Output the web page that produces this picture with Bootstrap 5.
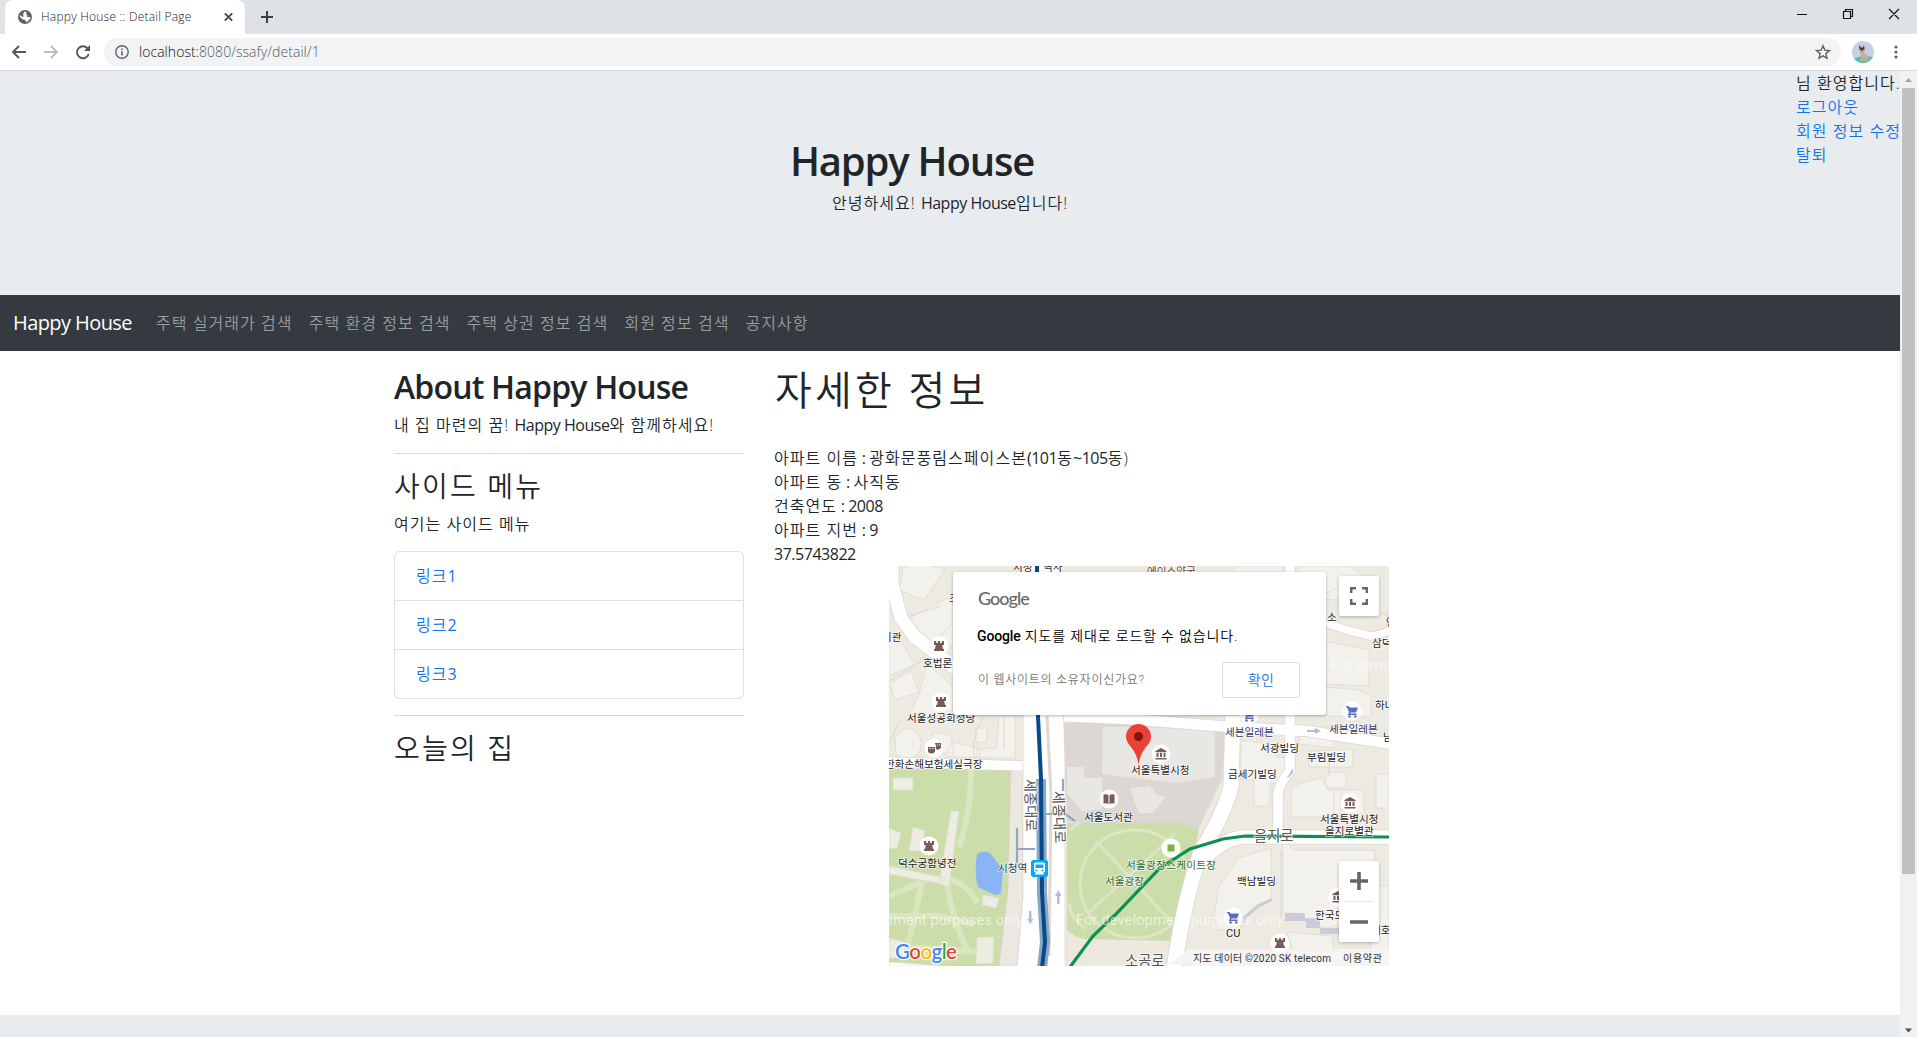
<!DOCTYPE html>
<html lang="ko">
<head>
<meta charset="utf-8">
<meta name="viewport" content="width=device-width, initial-scale=1">
<title>Happy House :: Detail Page</title>
<link href="https://cdn.jsdelivr.net/npm/bootstrap@5.3.0/dist/css/bootstrap.min.css" rel="stylesheet">
<style>
body{font-family:"Open Sans","Noto Sans CJK KR",sans-serif;font-size:16px;line-height:1.5;color:#212529;letter-spacing:.066em;height:1037px;overflow:hidden;font-weight:350}
a{color:#1474ec;text-decoration:none}
.en{letter-spacing:-.03em;font-weight:400}
.tabstrip{height:34px;background:#dee1e6;padding-left:5px}
.browser-tab{width:240px;height:34px;background:#fff;border-radius:8px 8px 0 0;padding:0 12px 0 13px}
.tab-title{font-size:12px;width:152px;margin-left:9px;color:#202124;letter-spacing:.018em;white-space:nowrap;line-height:30px}
.toolbar{height:37px;border-bottom:1px solid #d5d8dc;background:#fff;padding:0 18px 0 11px}
.address{height:28px;border-radius:14px;background:#f1f3f4;margin-left:13px;padding:0 10px 0 11px}
.url{font-size:14px;letter-spacing:.003em;margin-left:10px;color:#111;line-height:26px}
.url span{color:#55595d}
.avatar{margin-left:11px}
.viewport{height:966px}
.page{width:1900px;overflow:hidden;background:#fff}
.scroller{width:17px;background:#f1f1f1}
.thumb{width:13px;height:786px;background:#c1c1c1}
.hero{height:224px;background:#e9ecef;padding-top:66px}
.hero h1{font-size:40px;font-weight:600;line-height:48px;letter-spacing:-.03em;padding-right:76px;margin-bottom:6px}
.hero p{margin:0}
.user-menu{top:0;right:0;width:104px;white-space:nowrap}
.site-nav{height:56px;background:#343a40;padding:8px 13px}
.site-nav .navbar-brand{font-size:20px;letter-spacing:-.029em;margin-right:16px;padding:0;color:#fff;width:119px;white-space:nowrap;font-weight:400;line-height:44px}
.site-nav .nav-link{color:#9a9da0;padding:8px;line-height:22px;white-space:nowrap}
.main-area{max-width:1140px;--bs-gutter-x:30px;padding-top:15px;height:664px;position:relative;left:-1px}
.main-area .row{--bs-gutter-x:30px}
.main-area h2.en{font-size:32px;font-weight:600;line-height:38.4px;letter-spacing:-.025em;white-space:nowrap;padding-top:2px;margin-bottom:7px}
h3{font-size:28px;line-height:33.6px;font-weight:350;letter-spacing:.078em}
.detail-title{font-size:40px;line-height:48px;font-weight:350;margin-bottom:32px;letter-spacing:.08em;padding-left:1px}
hr{border-color:#ccc;opacity:.75}
.side-note{margin-bottom:15px}
.side-links .list-group-item{padding:12px 21px;border-color:#dfdfdf;line-height:24px}
.map-box{width:500px;height:400px;overflow:hidden}
.map-box svg text{font-family:"Roboto","Noto Sans CJK KR",sans-serif;letter-spacing:0;font-weight:400}
.map-dialog{left:64px;top:6px;width:373px;height:143px;background:#fff;border-radius:3px;box-shadow:0 1px 3px rgba(0,0,0,.3);padding:15px 26px 17px 25px;font-family:Roboto,"Noto Sans CJK KR",sans-serif}
.g-mark{font-family:Lato,sans-serif;font-size:18px;line-height:23px;letter-spacing:-.055em;color:#666a6d;font-weight:500}
.dlg-text{font-size:14px;line-height:20px;margin-top:16px;margin-left:-1px;color:#000;letter-spacing:.06em;white-space:nowrap}
.dlg-text b{font-weight:500;letter-spacing:-.01em}
.dlg-sub{font-size:12px;color:#757575;letter-spacing:.062em;white-space:nowrap}
.ok-btn{width:78px;height:36px;border:1px solid #dadce0;border-radius:3px;color:#1a73e8;font-size:14px;padding:0;background:#fff;letter-spacing:.03em;font-weight:350}
.map-ctl{width:40px;background:#fff;border-radius:2px;box-shadow:0 1px 4px -1px rgba(0,0,0,.4);left:450px}
.full-ctl{top:10px;height:40px}.zoom-ctl{top:295px;height:81px}
.foot{height:22px;background:#e9ecef}
</style>
<script src="https://cdn.jsdelivr.net/npm/bootstrap@5.3.0/dist/js/bootstrap.bundle.min.js"></script>
</head>
<body>
<div class="tabstrip d-flex">
  <div class="browser-tab d-flex align-items-center">
    <svg width="14" height="14" viewBox="0 0 14 14"><circle cx="7" cy="7" r="7" fill="#5f6368"/><path d="M6.3 1.5 8.8 2.3 8 4 9.4 5 8.6 6.6 11 7.3 12.4 7 12.2 8.7 9.8 11.2 8.3 12.3 7.4 10.5 6.8 9.8 4.3 9.2 1.6 6.3 2 4.9 4.5 6.9 5.8 6.2 5 4.4Z" fill="#fff"/></svg>
    <span class="tab-title">Happy House :: Detail Page</span>
    <svg class="ms-auto" width="10" height="10" viewBox="0 0 10 10"><path d="M1.800 1.300 9.200 8.700M9.200 1.300 1.800 8.700" stroke="#3c4043" stroke-width="1.7"/></svg>
  </div>
  <svg class="ms-3 mt-1" width="13" height="26" viewBox="0 0 13 26"><path d="M6 7v12M0 13h12" stroke="#3c4043" stroke-width="2"/></svg>
  <div class="ms-auto d-flex align-items-start">
    <svg width="120" height="28" viewBox="0 0 120 28" fill="none" stroke="#111" stroke-width="1.2"><path d="M0 14.5h10M46.500 11.500h7v7h-7zM48.500 11.500v-2h7v7h-2M92 9l10 10M102 9 92 19"/></svg>
  </div>
</div>
<div class="toolbar d-flex align-items-center">
  <svg width="80" height="18" viewBox="0 0 80 18" fill="none" stroke-width="1.9"><path d="M15 9H2M8 3 2 9l6 6" stroke="#54585c"/><path d="M33 9h13M40 3l6 6-6 6" stroke="#babcbe"/><path d="M77 6A6 6 0 1 0 77.700 11" stroke="#54585c"/><path d="M79 2v6h-6z" fill="#54585c"/></svg>
  <div class="address d-flex align-items-center flex-grow-1">
    <svg width="14" height="14" viewBox="0 0 14 14"><circle cx="7" cy="7" r="6.200" fill="none" stroke="#5f6368" stroke-width="1.400"/><path d="M6.200 6.200h1.600v4.300H6.200zM6.200 3.500h1.600v1.600H6.200z" fill="#5f6368"/></svg>
    <span class="url">localhost:<span>8080/ssafy/detail/1</span></span>
    <svg class="ms-auto" width="16" height="16" viewBox="0 0 16 16" fill="none" stroke="#5f6368" stroke-width="1.400"><path d="m8 1.800 1.800 4.300 4.700.4-3.600 3.100 1.100 4.600L8 11.800l-4 2.400 1.100-4.600L1.500 6.500l4.700-.4z"/></svg>
  </div>
  <svg class="avatar" width="33" height="24" viewBox="0 0 33 24"><defs><clipPath id="av"><circle cx="11" cy="12" r="11"/></clipPath></defs><g clip-path="url(#av)"><path d="M0 0h22v24H0z" fill="#c8cee6"/><path d="M0 19q10-4 22-2v8H0z" fill="#3fc8ae"/><path d="m7 5 2 3h2l1-3 1 5-1 3 4 3 1 3-3 2H8l1-6-2-5z" fill="#c5ad91"/><path d="M7 5l2 2.500h2l1-2.500.500 4-2.500 2-2.500-2z" fill="#3d3b40"/></g></svg>
  <svg class="ms-2" width="6" height="16" viewBox="0 0 6 16" fill="#5f6368"><circle cx="3" cy="3" r="1.600"/><circle cx="3" cy="8" r="1.600"/><circle cx="3" cy="13" r="1.600"/></svg>
</div>
<div class="viewport d-flex">
<div class="page">
  <header class="hero position-relative text-center">
    <h1>Happy House</h1>
    <p>안녕하세요! <span class="en">Happy House</span>입니다!</p>
    <div class="user-menu position-absolute text-start">
      <div>님 환영합니다.</div><a class="d-block" href="#">로그아웃</a><a class="d-block" href="#">회원 정보 수정</a><a class="d-block" href="#">탈퇴</a>
    </div>
  </header>
  <nav class="navbar navbar-expand site-nav">
    <a class="navbar-brand" href="#">Happy House</a>
    <ul class="navbar-nav">
      <li class="nav-item"><a class="nav-link" href="#">주택 실거래가 검색</a></li>
      <li class="nav-item"><a class="nav-link" href="#">주택 환경 정보 검색</a></li>
      <li class="nav-item"><a class="nav-link" href="#">주택 상권 정보 검색</a></li>
      <li class="nav-item"><a class="nav-link" href="#">회원 정보 검색</a></li>
      <li class="nav-item"><a class="nav-link" href="#">공지사항</a></li>
    </ul>
  </nav>
  <main class="container main-area">
    <div class="row">
      <aside class="col-4">
        <h2 class="en">About Happy House</h2>
        <p>내 집 마련의 꿈! <span class="en">Happy House</span>와 함께하세요!</p>
        <hr>
        <h3>사이드 메뉴</h3>
        <p class="side-note">여기는 사이드 메뉴</p>
        <ul class="list-group side-links">
          <li class="list-group-item"><a href="#">링크<span class="en">1</span></a></li>
          <li class="list-group-item"><a href="#">링크<span class="en">2</span></a></li>
          <li class="list-group-item"><a href="#">링크<span class="en">3</span></a></li>
        </ul>
        <hr>
        <h3>오늘의 집</h3>
      </aside>
      <section class="col-8">
        <h1 class="detail-title">자세한 정보</h1>
        <div>아파트 이름<span class="en"> : </span>광화문풍림스페이스본<span class="en">(101</span>동<span class="en">~105</span>동)</div>
        <div>아파트 동<span class="en"> : </span>사직동</div>
        <div>건축연도<span class="en"> : 2008</span></div>
        <div>아파트 지번<span class="en"> : 9</span></div>
        <div class="en">37.5743822</div>
        <div class="map-box position-relative mx-auto">
<svg width="500" height="400" viewBox="0 0 500 400" style="display:block">
<defs>
<g id="castle"><circle r="9.500" fill="#fff"/><path d="M-5-5h2.200v2h1.700v-2h2.200v2h1.700v-2H5v4H3.200l.8 4H5v2H-5V3h1l.8-4H-5z" fill="#795c55"/></g>
<g id="museum"><circle r="9.500" fill="#fff"/><path d="M0-6 5.500-3v1.300h-11V-3zM-4.500-1h2v4h-2zM-1-1h2v4h-2zM2.500-1h2v4h-2zM-5.500 4h11v1.500h-11z" fill="#795c55"/></g>
<g id="cart"><circle r="9.500" fill="#fff"/><path d="M-6-5h2.500l1 1.500H6L4 1.500h-5.500l-.5 1H4.500V4H-4l1-3-2-4.700h-1z" fill="#5c6bc0"/><circle cx="-2.500" cy="5.500" r="1.300" fill="#5c6bc0"/><circle cx="3.300" cy="5.500" r="1.300" fill="#5c6bc0"/></g>
</defs>
<path d="M0 0h500v400H0z" fill="#edeae1"/>
<g fill="#f3f1eb" stroke="#dedad0" stroke-width=".8">
<path d="M14 2 28-4 56 3 35 34 10 24zM20 52 58 32 64 38 64 78 50 84 28 76zM0 66 12 76 26 98 0 110z"/>
<path d="M0 118 22 105 30 126 6 134zM38 98 64 120 64 150 20 150 30 128zM6 171q8-14 21-5 11 12 0 24-13 7-20-3zM44 166l18 3 3 18H44zM64 176 92 183 90 192 55 190zM87 162h11v14H87zM110 150h16v43l-38-2v-8l20-1z"/>
<path d="M345 0h50v6H345zM410 0h50l20 14-32 20-38-5zM437 75 480 84 480 120 437 118zM437 121l31 3 14 5v22l-45-1zM352 174l34 5v11l13 3v24h-18v23h-16v-26h-13zM410 170l35 4v8l-35-4zM422 185l42-2v18h-44zM437 206h20v16h-20zM410 218l22-6 8 12 12-2v29h-50v-27zM487 208h13v34h-13zM445 224h30v24h-30z"/>
<path d="M392 258 403 284h83v66l-50 12-13-5-20-10h-9v-56zM330 320l20-28 32-10v50l-20 12-12 20h-22l-3-14zM398 366l46 4v16h-40zM480 320h20v80h-18z"/>
</g>
<g fill="none" stroke="#d7d3c9" stroke-width=".8"><path d="M20 50 52 40M28 98 64 56M0 115 42 90M94 150q-14 28-8 45M115 150v34M10 156 0 178M412 40 448 22M446 55l12-8h40v20M440 190v20M392 285v70"/></g>
<path d="M0 203 121 203 134 203 134 330 128 394 110 400H0z" fill="#cbdda9"/>
<path d="M122 202h12v124l-6 74h-18l9-76z" fill="#ece8e0" stroke="#d9d2c5" stroke-width=".7"/>
<g fill="none" stroke="#d9e6bf" stroke-width="6"><path d="M82 203q0 44-12 78M0 330l40-17q34-5 48 24M33 318 18 383M58 318q5 35 22 70M0 350h50l35 8M0 380l90 6"/></g>
<g fill="#edece1" stroke="#dedace" stroke-width=".6"><path d="M4 212h20v12H4zM24 261l12 4-3 20H20zM62 245h8l-10 76-10-3zM0 262l12 5-4 16-8-1zM0 300l56 12-3 6-53-10zM94 329l16 3-3 10-14-3zM88 371h17l-1 26-17 1zM0 372l16 4v16H0z"/></g>
<path d="M88 288q5-4 13-1l13 17-2 23q-2 3-8 1l-15-7q-4-14-1-33z" fill="#8ab4f8"/>
<path d="M174 157 337 157 333 213 308 266 178 256z" fill="#dcd7d3"/>
<path d="M214 161h40l72 4v46l-38 6-75-9zM178 201h17v11h18v31l-20 2-15-18zM241 222l20-2 6 8 9 3-12 16h-14z" fill="#e9e7e4"/>
<path d="M178 257h117l15 8-12 52-15 58-92-2-13-8z" fill="#cbdda9"/>
<g fill="none" stroke="#dbe7c4" stroke-width="3"><ellipse cx="246" cy="318" rx="55" ry="54"/><path d="M207 275l80 86M198 348l88-80M181 264l10-8M180 337q1 14 17 26"/></g>
<path d="M177 368q55 17 106 8l-3 24H177z" fill="#ece8dd"/>
<g fill="none" stroke="#ddd6d0"><path d="M3-10V18L12 52 26 71 75 109" stroke-width="14.500"/><path d="M0 196 140 200" stroke-width="11"/><path d="M401 0V205Q389 219 389 228V266" stroke-width="11"/><path d="M170 150 240 153 341 161 418 165 503 178" stroke-width="12"/><path d="M434 56 461 65 481 70Q493 69 503 63" stroke-width="9"/><path d="M344 150 342 220Q337 244 312 286 296 330 285 402" stroke-width="16.500"/><path d="M502 271H356Q334 272 313 295" stroke-width="15"/></g>
<g fill="none" stroke="#fff"><path d="M3-10V18L12 52 26 71 75 109" stroke-width="13"/><path d="M0 196 140 200" stroke-width="9.500"/><path d="M401 0V205Q389 219 389 228V266" stroke-width="9.500"/><path d="M170 150 240 153 341 161 418 165 503 178" stroke-width="10.500"/><path d="M434 56 461 65 481 70Q493 69 503 63" stroke-width="7.500"/><path d="M344 150 342 220Q337 244 312 286 296 330 285 402" stroke-width="15"/><path d="M502 271H356Q334 272 313 295" stroke-width="13.500"/></g>
<path d="M0 396 60 400H0zM128 402 134 330V-2H170l6 200v204z" fill="#fff" stroke="#ddd6d0" stroke-width=".7"/>
<path d="M158 150l4 80-2 160" fill="none" stroke="#e0d7d2" stroke-width="3"/>
<path d="M175 398h105l20-15h200v17z" fill="#f5f3ef"/>
<path d="M152 213 153 326 156 376 153 402" fill="none" stroke="#86a9c6" stroke-width="10"/>
<path d="M128 262v35M128 283h18M157 248h19l10 7M174 213v12" fill="none" stroke="#8baac2" stroke-width="2.200"/>
<path d="M148-1 149 150 152 213 153 326 156 376 153 402" fill="none" stroke="#07498a" stroke-width="4"/>
<path d="M181 401 204 370 226 349 271 302 301 283 334 273 356 270 500 271" fill="none" stroke="#0d904f" stroke-width="3.200"/>
<g fill="#b3bbe4"><path d="M140 345h2.500v8h2l-3.200 5-3.300-5h2zM168 338h2.500v-8h2l-3.200-6-3.300 6h2zM418 164h8v-2l6 3-6 3v-2h-8zM398 212l6-10v5l-5 5z"/></g>
<path d="M396 347h20v5h15v10h20v6h-20v-6h-14v-7h-21zM349 355l20-17 14-6v3l-14 7-15 14z" fill="#cdcbd8"/>
<g fill="#fff" fill-opacity=".62" font-size="14.500"><text x="-73" y="359" textLength="207">For development purposes only</text><text x="187" y="359" textLength="207">For development purposes only</text><text x="442" y="104" textLength="207">For development purposes only</text></g>
<use href="#castle" x="50" y="80"/><use href="#castle" x="52" y="136"/><use href="#castle" x="40" y="280"/><use href="#castle" x="391" y="377"/>
<use href="#museum" x="272" y="188"/><use href="#museum" x="461" y="237"/><use href="#museum" x="449" y="331"/>
<use href="#cart" x="463" y="145"/><use href="#cart" x="360" y="149"/><use href="#cart" x="344" y="351"/>
<circle cx="45" cy="182" r="9.500" fill="#fff"/><path d="M39 181h7v5q-3.500 3-7 0zM46 177h6v5q-3 3-5 1v-3z" fill="#795c55"/><path d="M40.500 182.500h1.300m1.500 0h1.300M48 179h1m1 0h1" stroke="#fff"/>
<circle cx="220" cy="233" r="9.500" fill="#fff"/><path d="M214.500 228.500q3-1 5 .7v9q-2-1.500-5-.8zM225.500 228.500q-3-1-5 .7v9q2-1.500 5-.8z" fill="#795c55"/>
<circle cx="282" cy="282" r="9.500" fill="#fff"/><path d="M278.500 278.500h7v7h-7z" fill="#7cb342"/>
<g font-size="10.600" fill="#26231f" stroke="#fff" stroke-opacity=".6" stroke-width="1.800" paint-order="stroke">
<text x="34" y="101">호법론</text><text x="18" y="156">서울성공회성당</text><text x="-4" y="202">한화손해보험세실극장</text><text x="-7" y="75">회관</text><text x="438" y="55">소</text><text x="483" y="81">삼덕</text><text x="486" y="143">하나</text><text x="497" y="60">연</text><text x="494" y="175">남</text>
<text x="60" y="36">조</text><text x="124" y="5">시청</text><text x="154" y="5">역사</text><text x="258" y="9" fill="#6d3d2e">에이스약국</text>
<text x="336" y="170" fill="#303668">세븐일레븐</text><text x="440" y="167" fill="#303668">세븐일레븐</text>
<text x="371" y="186">서광빌딩</text><text x="418" y="195">부림빌딩</text><text x="242" y="208">서울특별시청</text><text x="339" y="212">금세기빌딩</text><text x="431" y="257">서울특별시청</text><text x="436" y="269">을지로별관</text>
<text x="237" y="303" fill="#336b30" textLength="90">서울광장스케이트장</text><text x="216" y="319" fill="#336b30">서울광장</text><text x="348" y="319">백남빌딩</text><text x="337" y="371" font-size="11">CU</text><text x="426" y="353">한국도</text><text x="482" y="368">세호</text>
<text x="109" y="306" fill="#17405f">시청역</text><text x="195" y="255">서울도서관</text><text x="9" y="301">덕수궁함녕전</text>
</g>
<g font-size="14.300" fill="#555" stroke="#fff" stroke-width="2" stroke-opacity=".7" paint-order="stroke"><text x="365" y="275">을지로</text><text x="236" y="400">소공로</text><text transform="translate(136 213) rotate(89)">세종대로</text><text transform="translate(164 225) rotate(88)">세종대로</text></g>
<rect x="142" y="294" width="17" height="17" rx="2.500" fill="#03a9f4"/><path d="M146.500 296.500h8q1.500 0 1.500 1.500v7.500l-2 1.500 1.500 1.500h-10l1.500-1.500-2-1.500V298q0-1.500 1.500-1.500z" fill="#fff"/><path d="M146.500 298.500h8v3.500h-8z" fill="#03a9f4"/><circle cx="147.500" cy="304.500" r="1" fill="#03a9f4"/><circle cx="153.500" cy="304.500" r="1" fill="#03a9f4"/>
<path d="M249.500 199Q248.500 189 242 181 237 176 237 170.500A12.500 12.500 0 0 1 262 170.500Q262 176 257 181 250.500 189 249.500 199z" fill="#ea4335"/><circle cx="249.500" cy="170.500" r="4.500" fill="#811411"/>
<path d="M301 386h199v14H301z" fill="#f5f5f5" fill-opacity=".75"/>
<g fill="#333" font-size="10"><text x="304" y="396" textLength="138">지도 데이터 ©2020 SK telecom</text><text x="454" y="396" textLength="39">이용약관</text></g>
<text x="6" y="393" font-size="20.500" textLength="62" stroke="#fff" stroke-width="2.500" paint-order="stroke" style="font-family:Lato,sans-serif;font-weight:600"><tspan fill="#4285f4">G</tspan><tspan fill="#ea4335">o</tspan><tspan fill="#fbbc05">o</tspan><tspan fill="#4285f4">g</tspan><tspan fill="#34a853">l</tspan><tspan fill="#ea4335">e</tspan></text>
</svg>
          <div class="map-dialog position-absolute d-flex flex-column">
            <div class="g-mark">Google</div>
            <div class="dlg-text"><b>Google</b> 지도를 제대로 로드할 수 없습니다.</div>
            <div class="d-flex justify-content-between align-items-center mt-auto"><span class="dlg-sub">이 웹사이트의 소유자이신가요?</span><button class="btn ok-btn">확인</button></div>
          </div>
          <div class="map-ctl full-ctl position-absolute d-flex align-items-center justify-content-center"><svg width="18" height="18" viewBox="0 0 18 18" fill="none" stroke="#666" stroke-width="2.400"><path d="M1.200 6V1.200H6M12 1.200h4.800V6M16.800 12v4.800H12M6 16.800H1.200V12"/></svg></div>
          <div class="map-ctl zoom-ctl position-absolute"><svg width="40" height="81" viewBox="0 0 40 81" style="display:block"><path d="M11 20h18M20 11v18M11 61h18" stroke="#666" stroke-width="3.600"/><path d="M5 40.500h30" stroke="#e6e6e6"/></svg></div>
        </div>
      </section>
    </div>
  </main>
  <footer class="foot"></footer>
</div>
<div class="scroller d-flex flex-column align-items-center">
  <svg width="17" height="17" viewBox="0 0 17 17"><path d="M5 11h7L8.500 7z" fill="#a3a3a3"/></svg>
  <div class="thumb"></div>
  <svg class="mt-auto" width="17" height="17" viewBox="0 0 17 17"><path d="M5 8.500h7L8.500 12.500z" fill="#505050"/></svg>
</div>
</div>
</body>
</html>
